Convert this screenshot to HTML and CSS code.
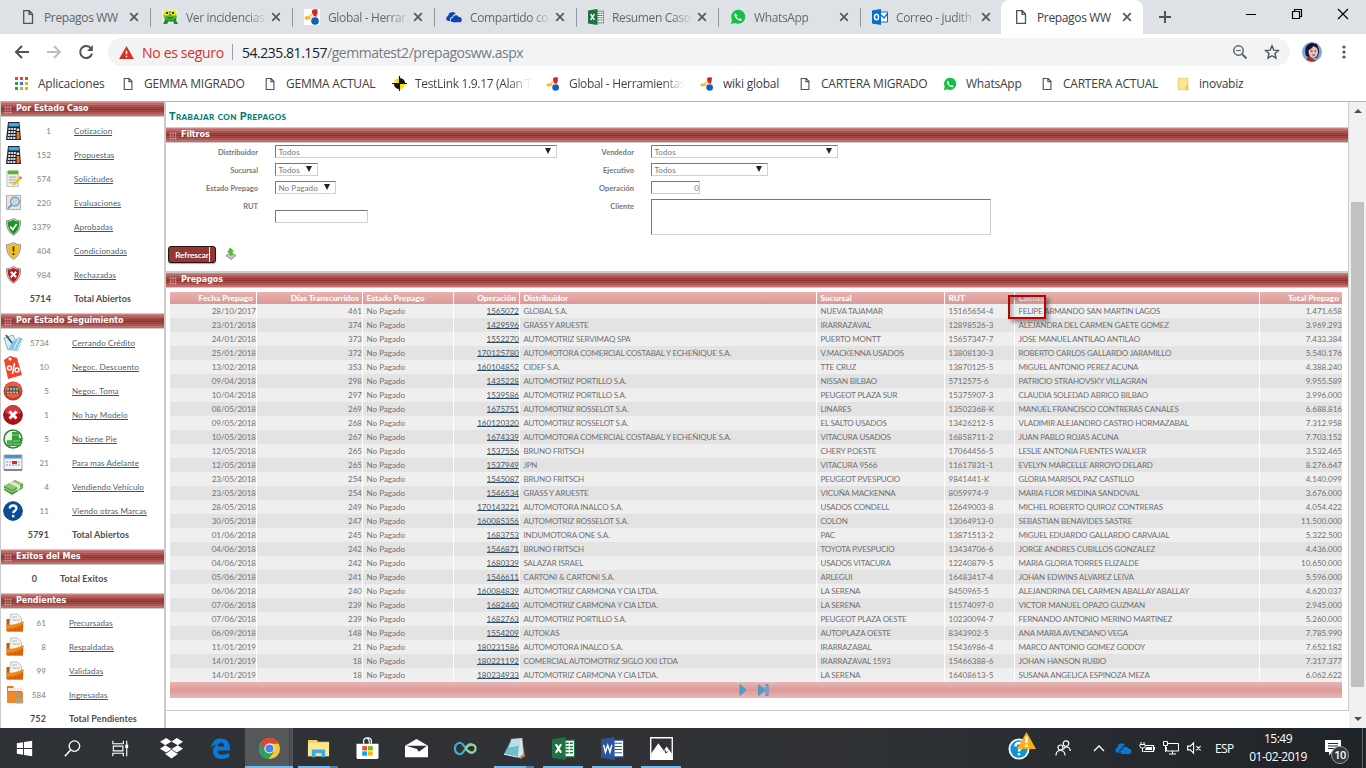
FILE: index.html
```html
<!DOCTYPE html>
<html lang="es">
<head>
<meta charset="utf-8">
<title>Prepagos WW</title>
<link rel="stylesheet" href="styles.css">
</head>
<body>
<svg class="defs" width="0" height="0">
  <symbol id="page" viewBox="0 0 16 16"><path d="M3.7 1.7h5.6l3.2 3.2v9.4H3.700zM9 2v3.300h3.300" fill="none" stroke="#505357" stroke-width="1.300"/></symbol>
  <symbol id="close" viewBox="0 0 10 10"><path d="M1.200 1.200l7.600 7.600M8.800 1.200L1.200 8.800" stroke="#55585c" stroke-width="1.700"/></symbol>
  <symbol id="global" viewBox="0 0 16 16"><path d="M2 9.300L11 2v5L5.500 9l6 3z" fill="#fcb424"/><path d="M5.500 8L9 5v2.500z" fill="#fff"/><path d="M8 1.500l5.500-1.300L12.500 8l-3-1.500z" fill="#e0201c"/><circle cx="2.500" cy="9" r="1.900" fill="#fcb424"/><circle cx="10.800" cy="3" r="2.700" fill="#e0201c"/><circle cx="11" cy="12" r="3.800" fill="#0c60c0"/></symbol>
  <symbol id="wa" viewBox="0 0 16 16"><path d="M1 15l1-4A7 7 0 1 1 5 14z" fill="#12c143"/><path d="M5.500 4.200c-2 1-.8 3.700 1 5.500s4.600 2.800 5.600 1l-2-1.500-1.300.8C7.700 9.500 7 8.700 6.500 7.500l.8-1z" fill="#fff"/></symbol>
  <symbol id="cloud" viewBox="0 0 18 12"><path d="M2.500 10.500a2.800 2.800 0 0 1 0-5.500 4.600 4.600 0 0 1 8.500-2.500 4.500 4.500 0 0 0-4 3.800 2.400 2.400 0 0 0-1.800 4.200z" fill="currentColor"/><path d="M8 12a2.500 2.500 0 0 1-.2-5A3.600 3.600 0 0 1 14.500 6a3 3 0 0 1 .5 6z" fill="currentColor"/></symbol>
  <symbol id="xl" viewBox="0 0 22 22"><path d="M12 3h9.500v16H12z" fill="#fff" stroke="#1f7244"/><path d="M13 6h7M13 9h7M13 12h7M13 15h7" stroke="#1f7244" stroke-width="1.400"/><path d="M16.500 4v14" stroke="#fff"/><path d="M0 2.200L13 0v22L0 19.800z" fill="#1f7244"/><path d="M3.700 7l5 8M8.700 7l-5 8" stroke="#fff" stroke-width="2"/></symbol>
  <symbol id="calc" viewBox="0 0 16 20"><path d="M2.500 1h11.500L15.500 19H.5z" fill="#20252b"/><path d="M3.300 2h10l.3 3.500H3z" fill="#3fa9e8"/><path d="M3 8h7.500M2.600 11h7.900M2.400 14h8M2 17h8.500" stroke="#d7dde2" stroke-width="2" stroke-dasharray="2 .7"/><path d="M11.200 7.500h2.500V10h-2.500z" fill="#ddd"/><path d="M11.200 11h2.700l.3 7h-3z" fill="#e87818"/></symbol>
  <symbol id="shield" viewBox="0 0 16 18"><path d="M8 .6q3 2 7 2.200Q15.500 13 8 17.400 .5 13 1 2.800 5 2.600 8 .6z" fill="#d0d0d0" stroke="#777" stroke-width=".8"/><path d="M8 2q2.500 1.500 5.800 1.800Q13.800 12.500 8 16.200 2.200 12.500 2.200 3.800 5.500 3.500 8 2z" fill="currentColor"/></symbol>
  <symbol id="folder" viewBox="0 0 18 20"><path d="M.5 6h5v4h11v8H.5z" fill="#b9560c"/><path d="M4.500 1h7l4 4v9H3z" fill="#f3f3f0" stroke="#aaa" stroke-width=".7"/><path d="M6 4h5M6 7h8" stroke="#bbb"/><path d="M.5 11.500q9 1 17-3.500L17 18.500H1z" fill="#f08a1c"/><path d="M1 16q8 0 16-5l-.1 7.500H1z" fill="#d96409"/></symbol>
</svg>

<header class="tabs">
  <div class="tab"><svg class="fav"><use href="#page"/></svg><span>Prepagos WW</span><svg class="x"><use href="#close"/></svg></div>
  <div class="tab"><svg class="fav" viewBox="0 0 16 16"><path d="M0 1h16v14H0z" fill="#e3f3df"/><path d="M2 8l4 2 2-1 3 1 4-3-1 4 2 4h-4l-1-3-2 1-2-1-2 3H1l2-4z" fill="#238c2c"/><ellipse cx="8" cy="6.500" rx="6.500" ry="4.500" fill="#57b82f"/><circle cx="4.500" cy="4" r="2.800" fill="#f3df24"/><circle cx="11.500" cy="4" r="2.800" fill="#f3df24"/><circle cx="5" cy="4" r="1"/><circle cx="11" cy="4" r="1"/><path d="M5 8.500q3 1.500 6 0" stroke="#175f1d" fill="none"/></svg><span>Ver incidencias</span><svg class="x"><use href="#close"/></svg></div>
  <div class="tab"><svg class="fav white"><use href="#global"/></svg><span>Global - Herrar</span><svg class="x"><use href="#close"/></svg></div>
  <div class="tab"><svg class="fav navy"><use href="#cloud"/></svg><span>Compartido co</span><svg class="x"><use href="#close"/></svg></div>
  <div class="tab"><svg class="fav"><use href="#xl"/></svg><span>Resumen Caso</span><svg class="x"><use href="#close"/></svg></div>
  <div class="tab"><svg class="fav"><use href="#wa"/></svg><span>WhatsApp</span><svg class="x"><use href="#close"/></svg></div>
  <div class="tab last"><svg class="fav" viewBox="0 0 16 16"><path d="M8 3h7.500v10H8z" fill="#fff" stroke="#0072c6"/><path d="M9 6l3 3 4-5" fill="none" stroke="#0072c6" stroke-width="1.300"/><path d="M0 1.500L9 0v16L0 14.500z" fill="#0072c6"/><ellipse cx="4.500" cy="8" rx="2" ry="2.800" fill="none" stroke="#fff" stroke-width="1.500"/></svg><span>Correo - judith</span><svg class="x"><use href="#close"/></svg></div>
  <div class="tab active"><svg class="fav"><use href="#page"/></svg><span>Prepagos WW</span><svg class="x"><use href="#close"/></svg></div>
  <svg class="plus" viewBox="0 0 14 14"><path d="M7 1v12M1 7h12" stroke="#505357" stroke-width="2"/></svg>
  <div class="win">
    <svg viewBox="0 0 12 12"><path d="M1 6.500h10" stroke="#000"/></svg>
    <svg viewBox="0 0 12 12"><path d="M1.500 3.500h7v7h-7zM3.500 3.500v-2h7v7h-2" fill="none" stroke="#000" stroke-width="1.200"/></svg>
    <svg viewBox="0 0 12 12"><path d="M1 1l10 10M11 1L1 11" stroke="#000" stroke-width="1.200"/></svg>
  </div>
</header>

<div class="toolbar">
  <svg class="nav" viewBox="0 0 16 16"><path d="M15 8H2M8 2L2 8l6 6" fill="none" stroke="#505357" stroke-width="2"/></svg>
  <svg class="nav" viewBox="0 0 16 16"><path d="M1 8h13M8 2l6 6-6 6" fill="none" stroke="#bcbec1" stroke-width="2"/></svg>
  <svg class="nav" viewBox="0 0 16 16"><path d="M13 4.500A6 6 0 1 0 14 9.500" fill="none" stroke="#505357" stroke-width="2"/><path d="M14.800 1v6H9z" fill="#505357"/></svg>
  <div class="omni">
    <svg class="warn" viewBox="0 0 16 14"><path d="M8 0l8 14H0z" fill="#d93025"/><path d="M8 5v4M8 10.500v1.700" stroke="#fff" stroke-width="1.600"/></svg>
    <span class="unsafe">No es seguro</span><i></i><span class="url"><b>54.235.81.157</b>/gemmatest2/prepagosww.aspx</span>
    <svg class="oi mag" viewBox="0 0 16 16"><circle cx="6.500" cy="6.500" r="4.700" fill="none" stroke="#5f6368" stroke-width="1.500"/><path d="M10 10l4.500 4.500" stroke="#5f6368" stroke-width="1.900"/><path d="M4.300 6.500h4.400" stroke="#5f6368" stroke-width="1.200"/></svg>
    <svg class="oi" viewBox="0 0 16 16"><path d="M8 1.800l1.800 4.300 4.700.4-3.500 3.100 1 4.500L8 11.700l-4 2.400 1-4.500-3.500-3.100 4.700-.4z" fill="none" stroke="#505357" stroke-width="1.400"/></svg>
  </div>
  <svg class="avatar" viewBox="0 0 20 20"><circle cx="10" cy="10" r="10" fill="#76a8de"/><path d="M4 14Q1 2 10 1.500 18 2 17 11l-2 5-8-1z" fill="#1c1229"/><ellipse cx="11.300" cy="10" rx="4.800" ry="6" fill="#e5bdb8"/><path d="M6 8q4-1 5-4l5 2-1-4-6-1-4 3z" fill="#1c1229"/><path d="M4.500 18q1-5 3.500-3l4 2.500 2 1.500q-5 2-9.500-1z" fill="#b02c23"/><path d="M8.500 9h2M12.500 9h1.700M10.500 13h2.500" stroke="#6b2a3c"/></svg>
  <svg class="menu" viewBox="0 0 4 16"><circle cx="2" cy="3" r="1.600" fill="#505357"/><circle cx="2" cy="8" r="1.600" fill="#505357"/><circle cx="2" cy="13" r="1.600" fill="#505357"/></svg>
</div>

<nav class="marks">
  <a class="m0"><svg viewBox="0 0 14 14"><path d="M0 0h3v3H0zM5 0h3v3H5zM10 0h3v3h-3zM0 5h3v3H0z" fill="#ea4335"/><path d="M5 5h3v3H5z" fill="#1a82e8"/><path d="M10 5h3v3h-3zM5 10h3v3H5zM10 10h3v3h-3z" fill="#f5a70a"/><path d="M0 5h3v3H0zM0 10h3v3H0z" fill="#2f9e4f"/></svg>Aplicaciones</a>
  <a class="m1"><svg><use href="#page"/></svg>GEMMA MIGRADO</a>
  <a class="m2"><svg><use href="#page"/></svg>GEMMA ACTUAL</a>
  <a class="m3"><svg viewBox="0 0 16 16"><circle cx="8" cy="8" r="6" fill="#ffe800"/><path d="M8 8V2a6 6 0 0 1 6 6zM8 8v6a6 6 0 0 1-6-6z" fill="#111"/><path d="M8 0v16M0 8h16" stroke="#111" stroke-width="1.200"/></svg><span>TestLink 1.9.17 (Alan T</span></a>
  <a class="m4"><svg><use href="#global"/></svg><span>Global - Herramientas</span></a>
  <a class="m5"><svg><use href="#global"/></svg>wiki global</a>
  <a class="m6"><svg><use href="#page"/></svg>CARTERA MIGRADO</a>
  <a class="m7"><svg><use href="#wa"/></svg>WhatsApp</a>
  <a class="m8"><svg><use href="#page"/></svg>CARTERA ACTUAL</a>
  <a class="m9"><svg viewBox="0 0 14 16"><path d="M1.500 1.500h11v13h-11z" fill="#ffe694" stroke="#ecc860"/><path d="M10.500 10.500h2v4h-2z" fill="#fff0b5" stroke="#dfb84b"/></svg>inovabiz</a>
</nav>

<main class="page">
  <aside class="side">
    <section class="s1">
      <h2 class="bar">Por Estado Caso</h2>
      <div class="row"><svg><use href="#calc"/></svg><b>1</b><a>Cotizacion</a></div>
      <div class="row"><svg><use href="#calc"/></svg><b>152</b><a>Propuestas</a></div>
      <div class="row"><svg viewBox="0 0 18 20"><path d="M2 2h12v16H2z" fill="#eef0ea" stroke="#aaa" stroke-width=".7"/><path d="M3 1h11v4H3z" fill="#59b52c"/><path d="M4 8h8M4 11h7M4 14h6" stroke="#a0a0a0"/><path d="M9 14l6-6 2 2-6 6-3 1z" fill="#eebd25"/><path d="M15 8l2 2 1-1-2-2z" fill="#d33"/></svg><b>574</b><a>Solicitudes</a></div>
      <div class="row"><svg viewBox="0 0 18 20"><path d="M1.500 2h15v15h-15z" fill="#e3e6e8" stroke="#aaa"/><circle cx="10.500" cy="8.500" r="4.700" fill="#b9dcef" stroke="#8498a6" stroke-width="1.300"/><path d="M7 12l-4 4" stroke="#8a8f93" stroke-width="2"/></svg><b>220</b><a>Evaluaciones</a></div>
      <div class="row"><svg class="green" viewBox="-.5 -1 17 20"><use href="#shield" width="16" height="18"/><path d="M4.700 8.500l2.500 3 4-5.500" fill="none" stroke="#fff" stroke-width="1.800"/></svg><b>3379</b><a>Aprobadas</a></div>
      <div class="row"><svg class="amber" viewBox="-.5 -1 17 20"><use href="#shield" width="16" height="18"/><path d="M8 4.500v5M8 11v2" stroke="#222" stroke-width="1.500"/></svg><b>404</b><a>Condicionadas</a></div>
      <div class="row"><svg class="red" viewBox="-.5 -1 17 20"><use href="#shield" width="16" height="18"/><path d="M5.300 5.800l5.400 5.400M10.700 5.800l-5.400 5.400" stroke="#fff" stroke-width="2"/></svg><b>984</b><a>Rechazadas</a></div>
      <div class="row total"><svg></svg><b>5714</b><strong>Total Abiertos</strong></div>
    </section>
    <section class="s2">
      <h2 class="bar">Por Estado Seguimiento</h2>
      <div class="row"><svg viewBox="0 0 20 20"><path d="M1 5l9-3 5 11-10 4z" fill="#dcebf2" stroke="#8db0bd"/><path d="M9 9l7-5 4 2-5 12-10-1z" fill="#83c6e3"/><path d="M11 16l5-11M14 17l5-10" stroke="#e8faff"/><path d="M3 2l6 8" stroke="#31546a" stroke-width="1.700"/></svg><b>5734</b><a>Cerrando Crédito</a></div>
      <div class="row big"><svg viewBox="0 0 20 24"><path d="M1 5l6-4 7 2 5 17-14 4z" fill="#f0452c"/><circle cx="7" cy="4" r="1.500" fill="#fff"/><circle cx="6.500" cy="13" r="2" fill="none" stroke="#fff" stroke-width="1.500"/><circle cx="14" cy="15" r="2" fill="none" stroke="#fff" stroke-width="1.500"/><path d="M11.500 8l-2 11" stroke="#fff" stroke-width="1.500"/></svg><b>10</b><a>Negoc. Descuento</a></div>
      <div class="row"><svg viewBox="0 0 20 20"><circle cx="10" cy="10" r="9.500" fill="#bd3a28"/><circle cx="10" cy="9" r="8.200" fill="#ef5c35"/><path d="M3 9l3-4h8l3 4v4H3z" fill="#6a5d56"/><path d="M4 8h12M4 11.500h12" stroke="#c9bbb0" stroke-width="1.500" stroke-dasharray="2 1"/></svg><b>5</b><a>Negoc. Toma</a></div>
      <div class="row"><svg viewBox="0 0 20 20"><circle cx="10" cy="10" r="9.300" fill="#b50e16" stroke="#850c12"/><path d="M2 8a8 8 0 0 1 16 0q-8 4-16 0z" fill="#d23a40"/><path d="M6.500 6.500l7 7M13.500 6.500l-7 7" stroke="#fff" stroke-width="3"/></svg><b>1</b><a>No hay Modelo</a></div>
      <div class="row"><svg viewBox="0 0 20 20"><circle cx="10" cy="10" r="9" fill="#edf4e9" stroke="#2e8634" stroke-width="1.500"/><path d="M9 3h7v6h2v8H4v-6h5z" fill="#399b3b"/><path d="M9 6h7M4 12h5M10 12h7M4 15h5M10 15h7" stroke="#8ecb79"/></svg><b>5</b><a>No tiene Pie</a></div>
      <div class="row"><svg viewBox="0 0 20 20"><path d="M1 2h18v15H1z" fill="#f2f4f7" stroke="#9aa8b7"/><path d="M1.500 2h17v3.500h-17z" fill="#4f92cf"/><path d="M3 9h14M3 12h14" stroke="#a9b5c4" stroke-width="1.500" stroke-dasharray="2 1"/><path d="M9 8h5v3H9z" fill="#e22"/><path d="M1 17h18" stroke="#789" stroke-width="2"/></svg><b>21</b><a>Para mas Adelante</a></div>
      <div class="row"><svg viewBox="0 0 20 20"><path d="M1 9l11-6 8 4v4L9 18l-8-5z" fill="#4d983c"/><path d="M1 9l11-6 8 4-11 6z" fill="#8fc677"/><path d="M6 6l8 4v4l3-2V8L9 4.500z" fill="#e8ead9"/><path d="M1 11l8 4 11-6" fill="none" stroke="#b8dba5"/></svg><b>4</b><a>Vendiendo Vehículo</a></div>
      <div class="row"><svg viewBox="0 0 20 20"><circle cx="10" cy="10" r="9.300" fill="#0a4d9c" stroke="#083e7a"/><path d="M6.800 7.500q0-3 3.300-3t3.300 2.800q0 1.700-1.800 2.700-1.300.7-1.300 2.300M10.200 14v2.300" fill="none" stroke="#fff" stroke-width="2.300"/></svg><b>11</b><a>Viendo otras Marcas</a></div>
      <div class="row total"><svg></svg><b>5791</b><strong>Total Abiertos</strong></div>
    </section>
    <section class="s3">
      <h2 class="bar">Exitos del Mes</h2>
      <div class="row total"><svg></svg><b>0</b><strong>Total Exitos</strong></div>
    </section>
    <section class="s4">
      <h2 class="bar">Pendientes</h2>
      <div class="row"><svg><use href="#folder"/></svg><b>61</b><a>Precursadas</a></div>
      <div class="row"><svg><use href="#folder"/></svg><b>8</b><a>Respaldadas</a></div>
      <div class="row"><svg><use href="#folder"/></svg><b>99</b><a>Validadas</a></div>
      <div class="row"><svg viewBox="0 0 18 20"><path d="M1 1h6l1 2h8v15H1z" fill="#e67916"/><path d="M2 3h14v3H2z" fill="#f5e8d7"/><path d="M1 7h16v11H1z" fill="#ef8a24"/><path d="M10.500 13v-3q0-2 2.500-2t2.500 2v3" fill="none" stroke="#999" stroke-width="1.400"/><path d="M9.500 12.500h7v6h-7z" fill="#b1a179"/></svg><b>584</b><a>Ingresadas</a></div>
      <div class="row total"><svg></svg><b>752</b><strong>Total Pendientes</strong></div>
    </section>
  </aside>

  <div class="content">
    <h1>Trabajar con Prepagos</h1>
    <h2 class="bar">Filtros</h2>
    <div class="filters">
      <label>Distribuidor</label><div class="sel w1">Todos<i></i></div>
      <label>Vendedor</label><div class="sel w2">Todos<i></i></div>
      <label>Sucursal</label><div class="sel w3">Todos<i></i></div>
      <label>Ejecutivo</label><div class="sel w4">Todos<i></i></div>
      <label>Estado Prepago</label><div class="sel w5">No Pagado<i></i></div>
      <label>Operación</label><div class="sel w6">0</div>
      <label>RUT</label><div class="sel w7"></div>
      <label>Cliente</label><div class="sel w8"></div>
    </div>
    <div class="actions"><button>Refrescar</button>
      <svg viewBox="0 0 12 13"><path d="M1 8.500l5-2.500 5 2.500-5 4z" fill="#c4c9cc" stroke="#777" stroke-width=".8"/><path d="M5 .5l4 3.500-1.500.5L8.500 8 5 9 4 5.500l-2 .3z" fill="#54bd35"/></svg>
    </div>
    <h2 class="bar second">Prepagos</h2>
    <div class="grid" id="grid"></div>
    <div class="pager">
      <svg viewBox="0 0 8 12"><path d="M1 .5L7 6l-6 5.500z" fill="#3da1dc" stroke="#6690b5"/></svg>
      <svg class="end" viewBox="0 0 11 12"><path d="M.5 .5L7 6 .5 11.500z" fill="#3da1dc" stroke="#6690b5"/><path d="M8 .5h2v11H8z" fill="#7dbbe6" stroke="#4f8fc8"/></svg>
    </div>
    <div class="mark"></div>
  </div>

  <div class="scroll"><svg viewBox="0 0 8 4"><path d="M0 4l4-4 4 4z" fill="#505050"/></svg><div class="thumb"></div><svg viewBox="0 0 8 4"><path d="M0 0l4 4 4-4z" fill="#505050"/></svg></div>
</main>

<footer class="task">
  <div class="app sys"><svg viewBox="0 0 24 24"><path d="M4 6.500l6.500-1v6H4zM11.500 5.300L20 4v7.500h-8.500zM4 12.500h6.500v6L4 17.600zM11.500 12.500H20V20l-8.500-1.300z" fill="#fff"/></svg></div>
  <div class="app sys"><svg viewBox="0 0 24 24"><circle cx="14" cy="9.500" r="5.500" fill="none" stroke="#fff" stroke-width="1.400"/><path d="M10 13.500L4 20" stroke="#fff" stroke-width="1.600"/></svg></div>
  <div class="app sys"><svg viewBox="0 0 24 24"><path d="M4 4v3h11V4M4 20v-3h11v3M4.500 9.500h10v5h-10zM18.500 4v16" fill="none" stroke="#fff" stroke-width="1.200"/><path d="M17 8h3v3.500h-3z" fill="#fff"/></svg></div>
  <div class="app"><svg viewBox="0 0 24 24"><path d="M6.500 1L12 4.600 5.500 8.600 0 5zM17.500 1L24 5l-5.500 3.600L12 4.600zM0 12.200l5.500-3.600 6.500 4-5.500 3.600zM24 12.200l-5.500-3.600-6.500 4 5.500 3.600zM5 17.600l1.500-.5 5.500-3.800 5.500 3.800 1.500.5-7 4.900z" fill="#fff"/></svg></div>
  <div class="app"><svg viewBox="0 0 24 24"><path d="M2 11Q4 1 12.500 1.500 22 2 22 12v2H9q0 4.500 5 4.500 4 0 7-1.800v4.500q-3.500 1.800-8 1.800-9-.5-9-8.500 0-4.500 4.500-6.800Q4.500 8 2 11zm7-1h7q0-4-3.300-4Q9.500 6 9 10z" fill="#0a78d7"/></svg></div>
  <div class="app cur"><svg viewBox="0 0 24 24"><circle cx="12" cy="12" r="11" fill="#f9c931"/><path d="M12 12L2.500 6.500A11 11 0 0 0 11 23l6-8z" fill="#28a258"/><path d="M2.500 6.500a11 11 0 0 1 19.500.5H12l-5 7z" fill="#dc4635"/><circle cx="12" cy="12" r="5.300" fill="#fff"/><circle cx="12" cy="12" r="4.200" fill="#4285f4"/></svg></div>
  <div class="app open split"><svg viewBox="0 0 24 24"><path d="M1 3h9l2 2h11v15H1z" fill="#f3d060"/><path d="M1 6h22v14H1z" fill="#ffe695"/><path d="M5 21v-8h14v8h-4v-4H9v4z" fill="#35aee5"/></svg></div>
  <div class="app"><svg viewBox="0 0 24 24"><path d="M.5 7h23v14q0 2-2 2h-19q-2 0-2-2z" fill="#fff"/><path d="M8 7V4q0-3 4-3t4 3v3M12 1q2 2 2 6" fill="none" stroke="#fff" stroke-width="1.300"/><path d="M6.500 9.500h5V14h-5z" fill="#f25022"/><path d="M12.500 9.500h5V14h-5z" fill="#7fba00"/><path d="M6.500 15h5v4.500h-5z" fill="#00a4ef"/><path d="M12.500 15h5v4.500h-5z" fill="#ffb900"/></svg></div>
  <div class="app"><svg viewBox="0 0 24 24"><path d="M0 9l12-7 12 7v12H0z" fill="#fff"/><path d="M1 9l22 0-8.500 6.500-2-3z" fill="#2c2f33"/></svg></div>
  <div class="app"><svg viewBox="0 0 24 24"><path d="M12 12Q9 6 6 6 1 7 1 12t5 6Q9 18 12 12t7-4" fill="none" stroke="#3aafca" stroke-width="2.300"/><path d="M12 12q3-4 6.500-4 4 .5 4 4t-4 4.500Q15 16 12 12" fill="none" stroke="#8fd4a0" stroke-width="2.300"/></svg></div>
  <div class="app open split"><svg viewBox="0 0 24 24"><path d="M20 2l3 18-5 3-3-3z" fill="#b88b4f"/><path d="M8 2l12-1 1 17-5 4z" fill="#d9e5e8"/><path d="M9 2h9l-3 19L1 18z" fill="#72bdca"/><path d="M9 2h9l-1 7-11 2z" fill="#b8e2e8"/><path d="M1 18l14 3" stroke="#e6f5f7"/></svg></div>
  <div class="app open"><svg viewBox="0 0 22 22"><use href="#xl"/></svg></div>
  <div class="app open"><svg viewBox="0 0 22 22"><path d="M12 3h9.500v16H12z" fill="#fff" stroke="#2b579a"/><path d="M13 6h7M13 9h7M13 12h7M13 15h7" stroke="#2b579a"/><path d="M0 2.200L13 0v22L0 19.800z" fill="#2b579a"/><path d="M2.500 7.500l1.700 7 2.200-6.500 2.200 6.500 1.700-7" fill="none" stroke="#fff" stroke-width="1.400"/></svg></div>
  <div class="app open"><svg viewBox="0 0 22 22"><path d="M.7 .7h20.600v20.600H.7z" fill="none" stroke="#fff" stroke-width="1.300"/><path d="M1 16l7-10 5 7 3-4 5 7v5H1z" fill="#fff"/><path d="M14 12l1 3 2-1" fill="none" stroke="#2c2f33"/></svg></div>

  <div class="tray">
    <svg class="help" viewBox="0 0 28 28"><circle cx="11" cy="17" r="10.500" fill="#fff"/><circle cx="11" cy="17" r="8.700" fill="#0c94d8"/><path d="M7.500 14.500q0-3.500 3.500-3.500t3.500 3q0 1.500-2 2.700-1.500.9-1.500 2.800M11 21v2.300" fill="none" stroke="#fff" stroke-width="2.500"/><path d="M18.500 0L28 17H9z" fill="#fbb01b"/><path d="M18.500 4.500v6.500M18.500 12.500V15" stroke="#fff" stroke-width="2.400"/></svg>
    <svg class="people" viewBox="0 0 16 16"><circle cx="5.500" cy="7.500" r="2.500" fill="none" stroke="#fff" stroke-width="1.200"/><path d="M1 15.500q0-5 4.500-5t4.500 5M8.500 9.500q.7-2.500 3-2.500 3.500 0 3.800 4" fill="none" stroke="#fff" stroke-width="1.200"/><circle cx="11" cy="3.600" r="2.800" fill="none" stroke="#fff" stroke-width="1.200"/></svg>
    <svg class="chev" viewBox="0 0 12 8"><path d="M1 7l5-5 5 5" fill="none" stroke="#fff" stroke-width="1.300"/></svg>
    <svg class="od"><use href="#cloud"/></svg>
    <svg class="bat" viewBox="0 0 16 12"><path d="M6.500 3.500h8v6h-10M15.500 5v3" fill="none" stroke="#fff" stroke-width="1.200"/><path d="M7 5h6v3H6z" fill="#fff"/><path d="M2 0v2M5 0v2M1 2.500h5v2q0 1.500-2.500 1.500T1 4.500zM3.500 6v4" fill="none" stroke="#fff"/></svg>
    <svg class="net" viewBox="0 0 16 14"><path d="M5 2.500h10.500v7.500H3.500V6M6 13h7M9.500 10v3M.5 .5h4v4h-4zM2.500 4.500V11" fill="none" stroke="#fff"/></svg>
    <svg class="vol" viewBox="0 0 16 14"><path d="M.7 5h2.800L7 1.500v11L3.500 9H.7zM10 5l4.500 4.500M14.500 5L10 9.500" fill="none" stroke="#fff" stroke-width="1.200"/></svg>
    <span class="lang">ESP</span>
    <div class="clock"><span>15:49</span><span>01-02-2019</span></div>
    <div class="note"><svg viewBox="0 0 16 16"><path d="M0 0h16v12H7l-3 3.500V12H0z" fill="#fff"/><path d="M3 3.500h10M3 6h10M3 8.500h6" stroke="#25282b"/></svg><em>10</em></div>
  </div>
</footer>
<script src="grid.js"></script>
</body>
</html>
```

FILE: styles.css
```css
* { box-sizing: border-box; }
body { margin: 0; width: 1366px; height: 768px; overflow: hidden; display: flex; flex-direction: column; background: #fff; font-family: Lato, "Open Sans", sans-serif; }
svg { display: block; flex: none; }
.defs { position: absolute; }
h1, h2 { margin: 0; }

.tabs { height: 34px; flex: none; background: #dee1e6; display: flex; padding-left: 8px; font: 12px "Open Sans", sans-serif; letter-spacing: -.35px; color: #5f6368; }
.tab { width: 142px; height: 34px; display: flex; align-items: center; padding: 0 11px 0 12px; position: relative; }
.tab::after { content: ""; position: absolute; right: -1px; top: 8px; width: 1px; height: 19px; background: #96999d; }
.tab.last::after, .tab.active::after { display: none; }
.tab .fav { width: 16px; height: 16px; margin-right: 8px; }
.tab .white { background: #fff; }
.tab .navy { color: #0b47ae; }
.tab span { flex: 1; white-space: nowrap; min-width: 0; color: transparent; background: linear-gradient(90deg, #5f6368 60px, #5f636820 79px); -webkit-background-clip: text; background-clip: text; }
.tab:first-child span { color: #5f6368; background: none; }
.tab .x { width: 10px; height: 10px; margin-left: 6px; }
.tab.active { background: #fff; border-radius: 8px 8px 0 0; margin-left: -1px; }
.tab.active span { color: #3c4043; background: none; }
.plus { width: 14px; height: 14px; margin: 10px 0 0 15px; }
.win { display: flex; gap: 34px; margin: 8px 0 0 73px; }
.win svg { width: 12px; height: 12px; }

.toolbar { height: 36px; flex: none; display: flex; align-items: center; padding: 0 19px 0 14px; }
.nav { width: 16px; height: 16px; margin-right: 16px; }
.omni { flex: none; width: 1182px; height: 28px; margin-left: -2px; border-radius: 14px; background: #f1f3f4; display: flex; align-items: center; padding: 0 10px 0 11px; font: 14px "Open Sans", sans-serif; letter-spacing: -.47px; color: #777b80; }
.warn { width: 15px; height: 13px; margin-right: 8px; }
.unsafe { color: #d93025; width: 82px; white-space: nowrap; letter-spacing: -.32px; }
.omni i { width: 1px; height: 16px; background: #9aa0a6; margin: 0 9px 0 8px; }
.url { flex: 1; }
.url b { font-weight: 400; color: #202124; }
.oi { width: 16px; height: 16px; }
.mag { margin-right: 16px; }
.avatar { width: 20px; height: 20px; margin-left: 12px; }
.menu { width: 4px; height: 16px; margin-left: 20px; }

.marks { height: 32px; flex: none; border-bottom: 1px solid #b5b5b6; display: flex; padding: 0 0 4px 15px; font: 12px "Open Sans", sans-serif; letter-spacing: -.23px; color: #3c4043; }
.marks a { display: flex; align-items: center; gap: 9px; white-space: nowrap; flex: none; }
.marks svg { width: 14px; height: 14px; }
.marks span { letter-spacing: -.33px; color: transparent; background: linear-gradient(90deg, #3c4043 94px, #3c404310 114px); -webkit-background-clip: text; background-clip: text; }
.m0 { width: 106px; }
.m1, .m2 { width: 142px; }
.marks .m2 { width: 129px; }
.m3, .m4 { width: 154px; }
.marks .m3 { gap: 8px; }
.marks .m3 svg { width: 15px; height: 15px; }
.m5 { width: 98px; }
.m6 { width: 145px; }
.m7 { width: 97px; }
.m8 { width: 136px; }

.page { height: 626px; flex: none; display: flex; overflow: hidden; }
.side { width: 166px; height: 626px; border-left: 1px solid #ccc; border-right: 2px solid #ccc; overflow: hidden; }
.side section { border-bottom: 1px solid #ccc; padding-bottom: 2px; }
.bar { height: 15px; border-bottom: 1px solid #ccc; padding-left: 15px; color: #fff; font: bold 8px/14px "DejaVu Sans", sans-serif; letter-spacing: -.04px; position: relative;
  background: repeating-linear-gradient(rgba(255,255,255,.06) 0 1px, rgba(60,0,0,.06) 1px 2px), linear-gradient(#cf8482, #aa4d49 30%, #92322f 50%, #aa4d49 75%, #cb7d7a); }
.bar::before { content: ""; position: absolute; left: 3px; top: 4px; width: 8px; height: 8px; background: radial-gradient(circle, #e9c4c3 0 .6px, transparent 1px) 0 0 / 2.660px 2.660px; }
.row { height: 24px; display: flex; align-items: center; font-size: 8px; color: #808080; padding-left: 4px; }
.row svg { width: 17px; height: 20px; }
.bar + .row { margin-top: 2px; }
.row b { font-weight: 400; text-align: right; width: 29px; margin-right: 23px; letter-spacing: .1px; }
.row a { color: #4f6070; border-bottom: 1px solid #36576f; line-height: 8px; letter-spacing: .14px; }
.row.total b, .row strong { font-weight: 700; color: #4d4d4d; font-size: 9px; letter-spacing: .1px; padding-bottom: 2px; }
.green { color: #129b18; } .amber { color: #f2bd17; } .red { color: #c4151b; }
.s2 .row { padding-left: 2px; }
.s2 .row svg { width: 20px; height: 20px; }
.s2 .row.big svg { height: 24px; }
.s2 .row b { width: 26px; }
.s3 .row b { width: 15px; }
.s4 .row { padding-left: 5px; }
.s4 .row svg { width: 18px; }
.s4 .row b { width: 22px; }

.content { width: 1183px; height: 609px; border-right: 1px solid #ccc; border-bottom: 1px solid #ccc; position: relative; }
.content h1 { height: 26px; border-bottom: 1px solid #ccc; padding: 0 0 0 3px; font: 900 10.800px/27px Lato, sans-serif; font-variant: small-caps; letter-spacing: .42px; color: #007a7a; }
.filters { height: 92px; display: grid; grid-template: repeat(3, 18px) 38px / 109px 267px 109px 1fr; align-items: start; }
.filters label { font: bold 7.500px/20px Lato, sans-serif; color: #777; text-align: right; padding-right: 17px; }
.sel { height: 13px; margin-top: 2px; border: 1px solid #d0d0d0; border-top-color: #777; border-left-color: #777; color: #777; font-size: 8px; line-height: 13px; letter-spacing: .1px; padding: 0 4px 0 2.500px; display: flex; justify-content: space-between; background: #fff; }
.sel i { width: 0; height: 0; margin: 2px 1px 0 0; border: 3.500px solid transparent; border-top: 6px solid #222; border-bottom: 0; }
.w1 { width: 282px; } .w2 { width: 187px; } .w3 { width: 43px; } .w4 { width: 117px; } .w5 { width: 61px; }
.sel.w6 { width: 49px; justify-content: flex-end; padding: 0; }
.sel.w7 { width: 93px; margin-top: 13px; }
.w8 { width: 340px; height: 36px; }
.actions { height: 38px; display: flex; padding: 11px 0 0 2px; border-bottom: 2px solid #ccc; }
.actions button { width: 48px; height: 17px; padding: 0; border: 1px solid #2b1010; border-radius: 3px; color: #fff; font: bold 8px Lato, sans-serif; background: linear-gradient(90deg, transparent 40px, #fff 40px 41px, transparent 41px), #943634; box-shadow: 0 1px 1px #aaa; }
.actions svg { width: 12px; height: 13px; margin: 1px 0 0 9px; }
.grid { padding: 4px 0 0 4px; }
.tr { display: grid; grid-template-columns: 86px 105px 90px 65px 296px 127px 69px 244px 82px; column-gap: 1px; height: 13px; margin-bottom: 1px; font-size: 8px; line-height: 14px; color: #707070; white-space: nowrap; }
.tr > * { background: #efefef; padding: 0 3px 0 3.500px; }
.tr:nth-child(odd) > * { background: #e3e3e3; }
.tr .c2, .tr .c6 { letter-spacing: .02px; }
.tr .c4, .tr .c5, .tr .c7 { letter-spacing: -.18px; }
.tr .r { text-align: right; padding: 0; }
.tr .r a { display: inline-block; height: 10px; line-height: 12px; color: #4c5a66; border-bottom: 1px solid #2b4c66; }
.tr.head { height: 11px; line-height: 12px; font-size: 8.300px; font-weight: 900; color: #fff; }
.tr.head > * { background: linear-gradient(#e6b3b1, #dc9896); letter-spacing: 0; }
.tr.head .r { padding-right: 3px; }
.pager { width: 1172px; height: 16px; margin-left: 4px; background: linear-gradient(#e8b8b6, #db9997 50%, #e8b8b6); display: flex; align-items: center; padding-left: 569px; gap: 11px; }
.pager svg { width: 8px; height: 12px; }
.pager .end { width: 11px; }
.mark { position: absolute; left: 842px; top: 193px; width: 38px; height: 24px; border: 2px solid #c00000; box-shadow: 3px 3px 4px rgba(0,0,0,.4), inset 3px 3px 4px rgba(0,0,0,.25); }

.scroll { width: 17px; background: #f1f1f1; display: flex; flex-direction: column; align-items: center; padding: 7px 0; }
.scroll svg { width: 8px; height: 4px; }
.thumb { width: 13px; height: 485px; background: #c1c1c1; margin: 89px 0 30px; }

.task { height: 40px; flex: none; background: linear-gradient(90deg, #2e3135, #303236 60%, #1f2428); display: flex; color: #fff; font-family: "Open Sans", sans-serif; }
.app { width: 41px; margin-right: 8px; height: 40px; display: flex; align-items: center; justify-content: center; flex: none; }
.app svg { width: 23px; height: 23px; }
.app.sys { width: 48px; margin: 0; }
.app.sys + .app:not(.sys) { margin-left: 7px; }
.app.cur { width: 48px; margin: 0 5px 0 -4px; background: linear-gradient(90deg, #55585b 44px, #42464a 44px 45px, #505356 45px); border-bottom: 2px solid #76b9ed; padding-top: 2px; }
.app.open { width: 40px; margin-right: 9px; border-bottom: 2px solid #76b9ed; padding-top: 2px; }
.app.split { border-image: linear-gradient(90deg, #76b9ed 31px, #4f7fa8 31px) 2; border-top: 0; border-left: 0; border-right: 0; }
.tray { flex: 1; display: flex; align-items: center; justify-content: flex-end; }
.help { width: 28px; height: 28px; margin: -4px 19px 0 0; }
.people { width: 16px; height: 16px; margin-right: 22px; }
.chev { width: 12px; height: 8px; margin-right: 10px; }
.od { width: 17px; height: 11px; color: #0a78d7; margin-right: 7px; }
.bat { width: 16px; height: 12px; margin-right: 8px; }
.net { width: 16px; height: 14px; margin-right: 8px; }
.vol { width: 15px; height: 14px; margin-right: 13px; }
.lang { font-size: 12px; letter-spacing: -.6px; width: 19px; margin-right: 13px; }
.clock { width: 62px; display: flex; flex-direction: column; text-align: center; font-size: 12px; letter-spacing: -.5px; line-height: 18px; white-space: nowrap; margin-right: 16px; }
.note { width: 41px; height: 40px; position: relative; }
.note svg { width: 16px; height: 16px; margin: 12px 0 0; }
.note em { position: absolute; left: 6px; top: 18px; width: 18px; height: 18px; border: 1px solid #999; border-radius: 50%; background: #35383b; font: 600 11px/16px "Open Sans", sans-serif; text-align: center; letter-spacing: -.5px; }
.note::after { content: ""; position: absolute; right: 3px; top: 0; height: 40px; width: 1px; background: #62666a; }
```

FILE: grid.js
```js
const head = ['Fecha Prepago', 'Días Transcurridos', 'Estado Prepago', 'Operación', 'Distribuidor', 'Sucursal', 'RUT', 'Cliente', 'Total Prepago'];
const data = `28/10/2017|461|1565072|GLOBAL S.A.|NUEVA TAJAMAR|15165654-4|FELIPE ARMANDO SAN MARTIN LAGOS|1.471.658
23/01/2018|374|1429596|GRASS Y ARUESTE|IRARRAZAVAL|12898526-3|ALEJANDRA DEL CARMEN GAETE GOMEZ|3.969.293
24/01/2018|373|1552270|AUTOMOTRIZ SERVIMAQ SPA|PUERTO MONTT|15657347-7|JOSE MANUEL ANTILAO ANTILAO|7.433.384
25/01/2018|372|170125780|AUTOMOTORA COMERCIAL COSTABAL Y ECHEÑIQUE S.A.|V.MACKENNA USADOS|13808130-3|ROBERTO CARLOS GALLARDO JARAMILLO|5.540.176
13/02/2018|353|160104852|CIDEF S.A.|TTE CRUZ|13870125-5|MIGUEL ANTONIO PEREZ ACUNA|4.388.240
09/04/2018|298|1435228|AUTOMOTRIZ PORTILLO S.A.|NISSAN BILBAO|5712575-6|PATRICIO STRAHOVSKY VILLAGRAN|9.955.589
10/04/2018|297|1539586|AUTOMOTRIZ PORTILLO S.A.|PEUGEOT PLAZA SUR|15375907-3|CLAUDIA SOLEDAD ABRICO BILBAO|3.996.000
08/05/2018|269|1675751|AUTOMOTRIZ ROSSELOT S.A.|LINARES|13502368-K|MANUEL FRANCISCO CONTRERAS CANALES|6.688.816
09/05/2018|268|160120320|AUTOMOTRIZ ROSSELOT S.A.|EL SALTO USADOS|13426212-5|VLADIMIR ALEJANDRO CASTRO HORMAZABAL|7.312.958
10/05/2018|267|1674339|AUTOMOTORA COMERCIAL COSTABAL Y ECHEÑIQUE S.A.|VITACURA USADOS|16858711-2|JUAN PABLO ROJAS ACUNA|7.703.152
12/05/2018|265|1537556|BRUNO FRITSCH|CHERY P.OESTE|17064456-5|LESLIE ANTONIA FUENTES WALKER|3.532.465
12/05/2018|265|1537949|JPN|VITACURA 9566|11617831-1|EVELYN MARCELLE ARROYO DELARD|8.276.647
23/05/2018|254|1545087|BRUNO FRITSCH|PEUGEOT P.VESPUCIO|9841441-K|GLORIA MARISOL PAZ CASTILLO|4.140.099
23/05/2018|254|1546534|GRASS Y ARUESTE|VICUÑA MACKENNA|8059974-9|MARIA FLOR MEDINA SANDOVAL|3.676.000
28/05/2018|249|170143221|AUTOMOTORA INALCO S.A.|USADOS CONDELL|12649003-8|MICHEL ROBERTO QUIROZ CONTRERAS|4.054.422
30/05/2018|247|160085356|AUTOMOTRIZ ROSSELOT S.A.|COLON|13064913-0|SEBASTIAN BENAVIDES SASTRE|11.500.000
01/06/2018|245|1683753|INDUMOTORA ONE S.A.|PAC|13871513-2|MIGUEL EDUARDO GALLARDO CARVAJAL|5.322.500
04/06/2018|242|1546871|BRUNO FRITSCH|TOYOTA P.VESPUCIO|13434706-6|JORGE ANDRES CUBILLOS GONZALEZ|4.436.000
04/06/2018|242|1680339|SALAZAR ISRAEL|USADOS VITACURA|12240879-5|MARIA GLORIA TORRES ELIZALDE|10.650.000
05/06/2018|241|1546611|CARTONI & CARTONI S.A.|ARLEGUI|16483417-4|JOHAN EDWINS ALVAREZ LEIVA|5.596.000
06/06/2018|240|160084839|AUTOMOTRIZ CARMONA Y CIA LTDA.|LA SERENA|8450965-5|ALEJANDRINA DEL CARMEN ABALLAY ABALLAY|4.620.037
07/06/2018|239|1682440|AUTOMOTRIZ CARMONA Y CIA LTDA.|LA SERENA|11574097-0|VICTOR MANUEL OPAZO GUZMAN|2.945.000
07/06/2018|239|1682763|AUTOMOTRIZ PORTILLO S.A.|PEUGEOT PLAZA OESTE|10230094-7|FERNANDO ANTONIO MERINO MARTINEZ|5.260.000
06/09/2018|148|1554209|AUTOKAS|AUTOPLAZA OESTE|8343902-5|ANA MARIA AVENDANO VEGA|7.785.990
11/01/2019|21|180231586|AUTOMOTORA INALCO S.A.|IRARRAZABAL|15436986-4|MARCO ANTONIO GOMEZ GODOY|7.652.182
14/01/2019|18|180221192|COMERCIAL AUTOMOTRIZ SIGLO XXI LTDA|IRARRAZAVAL 1593|15466388-6|JOHAN HANSON RUBIO|7.317.377
14/01/2019|18|180234933|AUTOMOTRIZ CARMONA Y CIA LTDA.|LA SERENA|16408613-5|SUSANA ANGELICA ESPINOZA MEZA|6.062.622`;

const right = new Set([0, 1, 3, 8]);
const grid = document.getElementById('grid');

function addRow(cells, isHead) {
  const tr = document.createElement('div');
  tr.className = isHead ? 'tr head' : 'tr';
  cells.forEach((text, i) => {
    const cell = document.createElement('div');
    cell.className = (right.has(i) ? 'r' : 'l') + ' c' + i;
    if (i === 3 && !isHead) {
      const link = document.createElement('a');
      link.textContent = text;
      cell.append(link);
    } else {
      cell.textContent = text;
    }
    tr.append(cell);
  });
  grid.append(tr);
}

addRow(head, true);
data.split('\n').forEach(line => {
  const c = line.split('|');
  addRow([c[0], c[1], 'No Pagado', ...c.slice(2)], false);
});
```
